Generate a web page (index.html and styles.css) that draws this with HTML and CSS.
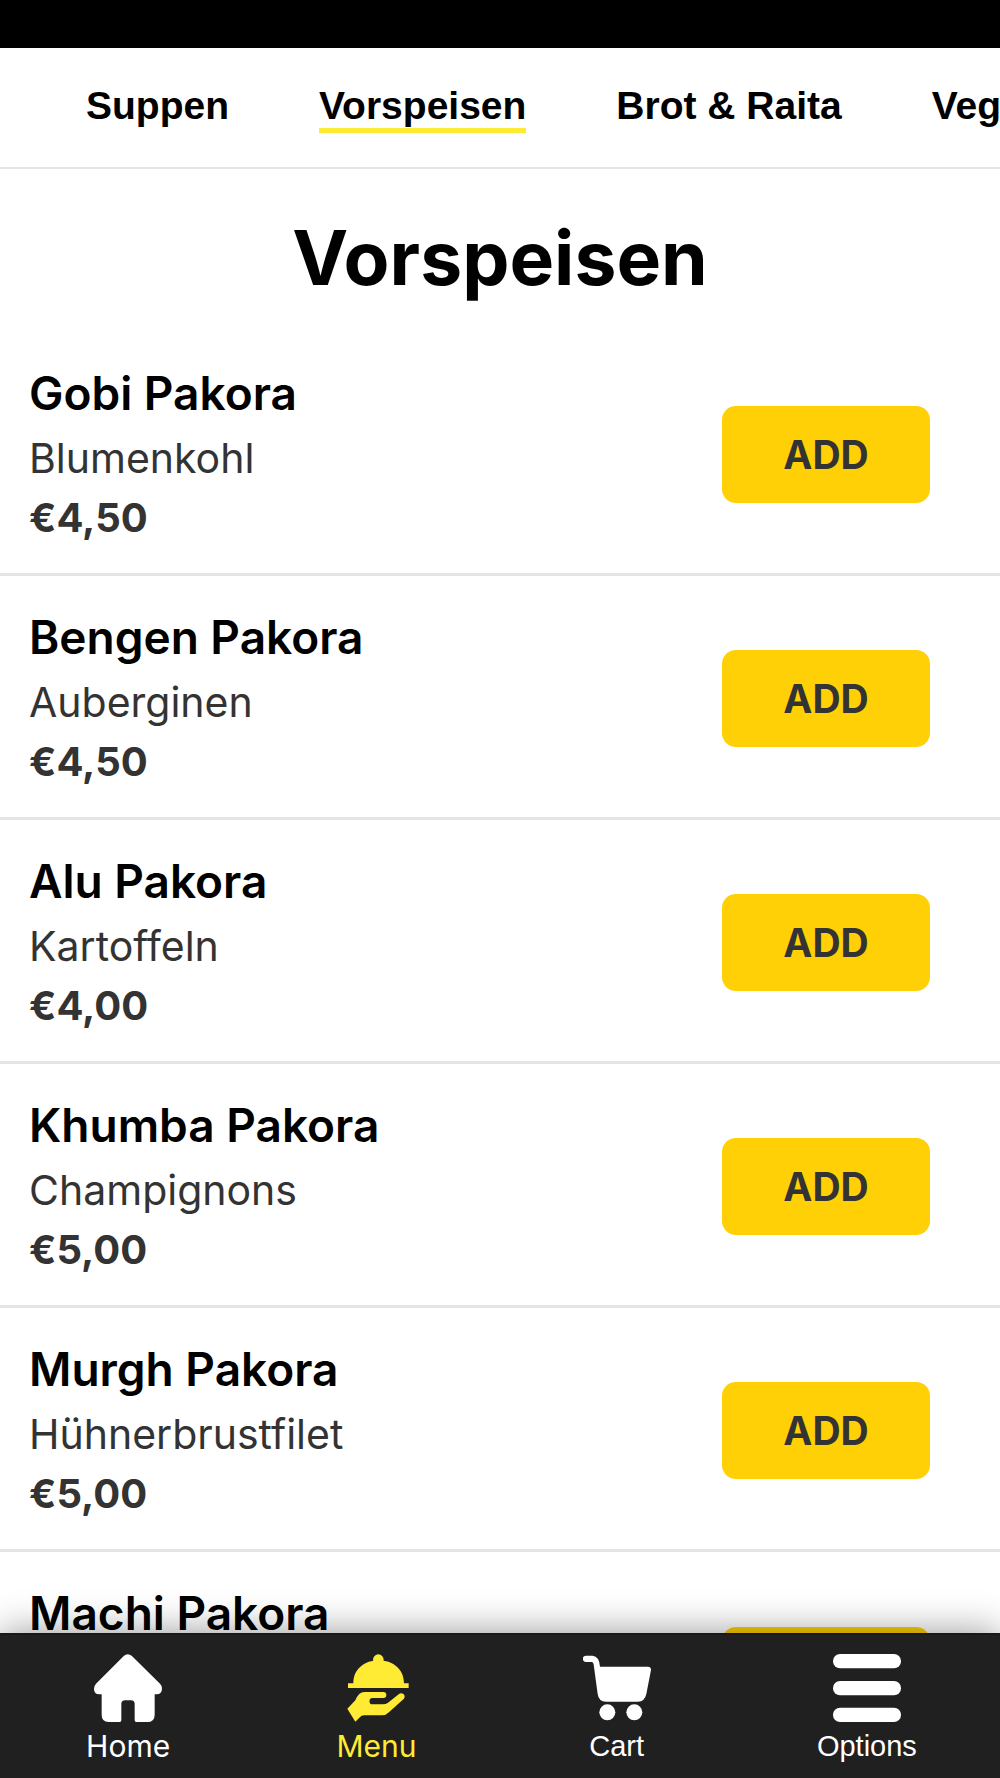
FILE: index.html
```html
<!DOCTYPE html>
<html lang="de">
<head>
<meta charset="utf-8">
<meta name="viewport" content="width=device-width, initial-scale=1">
<title>Vorspeisen</title>
<link rel="stylesheet" href="styles.css">
</head>
<body>
<header class="top">
  <nav class="tabs">
    <a class="tab" href="#suppen">Suppen</a>
    <a class="tab tab-active" href="#vorspeisen">Vorspeisen</a>
    <a class="tab" href="#brot">Brot &amp; Raita</a>
    <a class="tab" href="#veg">Veg</a>
  </nav>
</header>
<main class="menu" id="vorspeisen">
  <h1 class="title">Vorspeisen</h1>
  <ul class="dishes">
    <li class="dish">
      <div class="info"><h2 class="name">Gobi Pakora</h2><p class="desc">Blumenkohl</p><p class="price">€4,50</p></div>
      <button class="add" type="button">ADD</button>
    </li>
    <li class="dish">
      <div class="info"><h2 class="name">Bengen Pakora</h2><p class="desc">Auberginen</p><p class="price">€4,50</p></div>
      <button class="add" type="button">ADD</button>
    </li>
    <li class="dish">
      <div class="info"><h2 class="name">Alu Pakora</h2><p class="desc">Kartoffeln</p><p class="price">€4,00</p></div>
      <button class="add" type="button">ADD</button>
    </li>
    <li class="dish">
      <div class="info"><h2 class="name">Khumba Pakora</h2><p class="desc">Champignons</p><p class="price">€5,00</p></div>
      <button class="add" type="button">ADD</button>
    </li>
    <li class="dish">
      <div class="info"><h2 class="name">Murgh Pakora</h2><p class="desc">Hühnerbrustfilet</p><p class="price">€5,00</p></div>
      <button class="add" type="button">ADD</button>
    </li>
    <li class="dish dish-last">
      <div class="info"><h2 class="name">Machi Pakora</h2></div>
      <button class="add" type="button" aria-label="Add Machi Pakora"></button>
    </li>
  </ul>
</main>
<nav class="bottom">
  <a class="item" href="#home">
    <svg class="icon" viewBox="0 0 204 204" aria-hidden="true"><path d="M90 5Q101-4 113 5L198 89Q204 95 204 103Q204 121 188 121H182V182Q182 204 160 204H127Q122 204 122 199V150Q122 139 111 139H93Q82 139 82 150V199Q82 204 77 204H44Q23 204 23 183V121H16Q0 121 0 105Q0 95 6 89Z"/></svg>
    <span class="label">Home</span>
  </a>
  <a class="item item-active" href="#menu">
    <svg class="icon" viewBox="0 0 204 204" aria-hidden="true"><circle cx="109" cy="17" r="16"/><path d="M34 88C34 45 68 19 110 19S186 45 186 88H200V102H18V88Z"/><path d="M16 164L40 139Q50 114 67 114H124A9 9 0 0 1 124 132H92A9 9 0 0 0 92 151H122Q132 151 138 146L171 120C181 113 194 125 185 135L139 176Q131 184 120 184H67Q58 184 52 191L40 203Z"/></svg>
    <span class="label">Menu</span>
  </a>
  <a class="item" href="#cart">
    <svg class="icon" viewBox="0 0 204 204" aria-hidden="true"><path d="M9 5H29Q49 7 51 38H196Q205 39 204 48L190 120Q185 143 165 143H69Q47 143 44 120L33 39Q32 24 26 24H9A9 9 0 0 1 9 5Z"/><circle cx="73" cy="175" r="24"/><circle cx="154" cy="175" r="24"/></svg>
    <span class="label label-plain">Cart</span>
  </a>
  <a class="item" href="#options">
    <svg class="icon" viewBox="0 0 204 204" aria-hidden="true"><rect width="204" height="43" rx="21"/><rect y="81" width="204" height="43" rx="21"/><rect y="161" width="204" height="43" rx="21"/></svg>
    <span class="label label-plain">Options</span>
  </a>
</nav>
</body>
</html>
```
FILE: styles.css
```css
* {
  box-sizing: border-box;
}

body {
  display: flex;
  flex-direction: column;
  height: 100vh;
  margin: 0;
  overflow: hidden;
  background: #fff;
  color: #000;
  font-family: "Inter", sans-serif;
}

a {
  color: inherit;
  text-decoration: none;
}

.top {
  flex: none;
  border-top: 48px solid #000;
  border-bottom: 2px solid #e4e4e4;
}

.tabs {
  display: flex;
  gap: 90px;
  padding: 35px 0 34px 86px;
  overflow: hidden;
  font: bold 39px/45px "Liberation Sans", sans-serif;
  white-space: nowrap;
}

.tab {
  flex: none;
  border-bottom: 5px solid transparent;
}

.tab-active {
  border-bottom-color: #ffeb33;
}

.menu {
  flex: 1;
  min-height: 0;
  overflow: hidden;
}

.title {
  margin: 0;
  padding: 39px 0 24px;
  font-size: 75px;
  line-height: 100px;
  font-weight: 700;
  text-align: center;
}

.dishes {
  margin: 0;
  padding: 0;
  list-style: none;
}

.dish {
  display: flex;
  align-items: center;
  justify-content: space-between;
  padding: 29px 70px 25px 29px;
  border-bottom: 3px solid #e5e5e5;
}

.dish-last {
  align-items: flex-start;
  border-bottom: 0;
}

.dish-last .add {
  margin-top: 46px;
}

.name,
.desc,
.price {
  margin: 0;
}

.name {
  margin-bottom: 3px;
  font-size: 46px;
  line-height: 64px;
  font-weight: 600;
}

.desc {
  color: #333;
  font-size: 41px;
  line-height: 60px;
}

.price {
  color: #333;
  font-size: 40px;
  line-height: 60px;
  font-weight: 700;
}

.add {
  flex: none;
  width: 208px;
  height: 97px;
  border: 0;
  border-radius: 14px;
  background: #ffd005;
  color: #333;
  font: 700 39px/48px "Inter", sans-serif;
}

.bottom {
  position: relative;
  display: flex;
  flex: none;
  justify-content: space-around;
  padding: 19px 0 14px 3px;
  border-top: 2px solid #191919;
  background: #202020;
  box-shadow: 0 0 36px rgba(0, 0, 0, 0.42);
  color: #fff;
}

.item {
  display: flex;
  flex-direction: column;
  align-items: center;
  gap: 6px;
}

.item-active {
  color: #ffeb33;
}

.icon {
  width: 68px;
  height: 68px;
  fill: currentColor;
}

.label {
  font-size: 30px;
  line-height: 36px;
}

.label-plain {
  font-family: "Liberation Sans", sans-serif;
  font-size: 29px;
}
```
